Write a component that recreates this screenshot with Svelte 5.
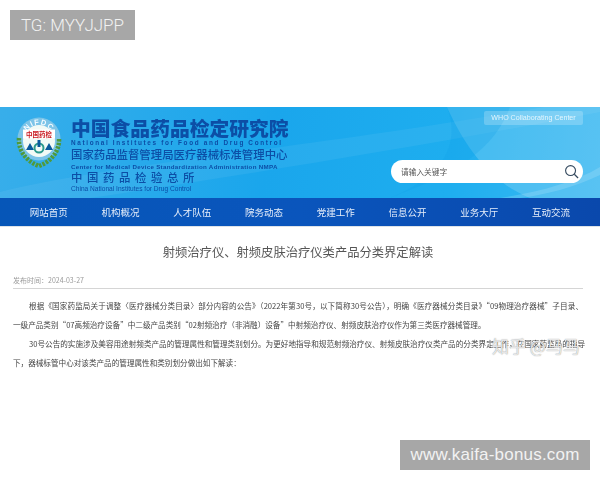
<script>
    const navItems = ['网站首页', '机构概况', '人才队伍', '院务动态', '党建工作', '信息公开', '业务大厅', '互动交流'];

    const paragraphs = [
        '根据《国家药监局关于调整〈医疗器械分类目录〉部分内容的公告》（2022年第30号，以下简称30号公告），明确《医疗器械分类目录》“09物理治疗器械”子目录、一级产品类别“07高频治疗设备”中二级产品类别“02射频治疗（非消融）设备”中射频治疗仪、射频皮肤治疗仪作为第三类医疗器械管理。',
        '30号公告的实施涉及美容用途射频类产品的管理属性和管理类别划分。为更好地指导和规范射频治疗仪、射频皮肤治疗仪类产品的分类界定工作，在国家药监局的指导下，器械标管中心对该类产品的管理属性和类别划分做出如下解读：'
    ];
</script>

<main>
    <div class="shot">
        <header class="banner">
            <!-- background swooshes -->
            <svg class="swoosh" viewBox="0 0 600 91" preserveAspectRatio="none" aria-hidden="true">
                <path d="M447 0 C465 40 490 75 530 91 L600 91 L600 0 Z" fill="#9adcf6" opacity="0.3" />
                <path d="M0 85 C120 55 330 40 600 -10 L600 5 C420 40 230 70 90 91 L0 91 Z" fill="#ffffff" opacity="0.06" />
                <path d="M390 91 C430 75 490 55 510 0 L447 0 C462 40 440 70 390 91 Z" fill="#0f9fe6" opacity="0.25" />
                <path d="M500 91 C540 85 575 75 600 60 L600 68 C575 80 545 88 520 91 Z" fill="#ffffff" opacity="0.15" />
            </svg>

            <div class="brand">
                <svg class="logo" viewBox="0 0 50 58" aria-hidden="true">
                    <circle cx="25" cy="25" r="21.5" fill="#7cc4e8" />
                    <circle cx="25" cy="27" r="16" fill="#f2faf6" />
                    <path d="M5 24 C4 38 14 48 25 52 C36 48 46 38 45 24" fill="none" stroke="#4f9a3c" stroke-width="4.5" stroke-dasharray="2.5 1.2" />
                    <path id="arc" d="M10.5 25 A14.5 14.5 0 0 1 39.5 25" fill="none" />
                    <text class="logo-en"><textPath href="#arc" startOffset="50%" text-anchor="middle">NIFDC</textPath></text>
                    <rect x="9" y="15.5" width="32" height="9" fill="#fff" />
                    <text x="25" y="23" class="logo-cn">中国药检</text>
                    <path d="M12 36 L16 29 L20 36 Z M31 36 L35 29 L39 36 Z" fill="#0a5a9c" />
                    <circle cx="25" cy="34" r="4.5" fill="none" stroke="#2a9a8c" stroke-width="2" />
                    <rect x="23.5" y="26" width="3" height="7" fill="#0a5a9c" />
                </svg>
                <div class="names">
                    <div class="name-main">中国食品药品检定研究院</div>
                    <div class="name-main-en">National Institutes for Food and Drug Control</div>
                    <div class="name-sub">国家药品监督管理局医疗器械标准管理中心</div>
                    <div class="name-sub-en">Center for Medical Device Standardization Administration NMPA</div>
                    <div class="name-third">中国药品检验总所</div>
                    <div class="name-third-en">China National Institutes for Drug Control</div>
                </div>
            </div>

            <div class="side">
                <div class="who">WHO Collaborating Center</div>
                <div class="search">
                    <span>请输入关键字</span>
                    <svg viewBox="0 0 16 16" width="15" height="15" aria-hidden="true">
                        <circle cx="7" cy="7" r="5.3" fill="none" stroke="#34495e" stroke-width="1.2" />
                        <path d="M11 11 L15 15" stroke="#34495e" stroke-width="1.4" />
                    </svg>
                </div>
            </div>
        </header>

        <nav class="nav">
            {#each navItems as item}
                <span>{item}</span>
            {/each}
        </nav>

        <article class="article">
            <h1>射频治疗仪、射频皮肤治疗仪类产品分类界定解读</h1>
            <div class="date">发布时间：2024-03-27</div>
            {#each paragraphs as text}
                <p>{text}</p>
            {/each}
        </article>
    </div>

    <div class="tag tag-top">TG: MYYJJPP</div>
    <div class="watermark">知乎 @马马</div>
    <div class="tag tag-bottom">www.kaifa-bonus.com</div>
</main>

<style>
    :global(body) {
        background: #fff;
    }

    main {
        position: relative;
        width: 600px;
        height: 480px;
        overflow: hidden;
        background: #fff;
        font-family: "Noto Sans CJK SC", "Liberation Sans", sans-serif;
    }

    .shot {
        padding-top: 107px;
        filter: blur(0.4px);
    }

    .banner {
        position: relative;
        height: 91px;
        display: flex;
        justify-content: space-between;
        padding: 4px 17px 0 14px;
        box-sizing: border-box;
        background: linear-gradient(100deg, #38aeea 0%, #1aa6ec 45%, #1eaeef 75%, #3cb9f2 100%);
    }

    .swoosh {
        position: absolute;
        inset: 0;
        width: 100%;
        height: 100%;
    }

    .brand {
        position: relative;
        display: flex;
        gap: 7px;
    }

    .logo {
        width: 50px;
        height: 58px;
        margin-top: 3px;
    }

    .logo-cn {
        font-size: 6.5px;
        font-weight: 700;
        fill: #c8161d;
        text-anchor: middle;
    }

    .logo-en {
        font-family: "Liberation Sans", sans-serif;
        font-size: 7.5px;
        font-weight: 700;
        letter-spacing: 1.2px;
        fill: #f4fbff;
    }

    .names {
        color: #0c4ea6;
        white-space: nowrap;
    }

    .name-main {
        font-size: 19.8px;
        font-weight: 900;
        line-height: 23px;
        margin-top: 5px;
    }

    .name-main-en {
        font-family: "Liberation Sans", sans-serif;
        font-size: 6.4px;
        font-weight: 700;
        letter-spacing: 1.65px;
        line-height: 8px;
        margin-top: 0;
    }

    .name-sub {
        font-size: 11.4px;
        font-weight: 500;
        line-height: 13px;
        margin-top: 1px;
    }

    .name-sub-en {
        font-family: "Liberation Sans", sans-serif;
        font-size: 6.2px;
        font-weight: 700;
        line-height: 7px;
        letter-spacing: 0.3px;
        margin-top: 2px;
    }

    .name-third {
        font-size: 11.4px;
        font-weight: 500;
        letter-spacing: 4.6px;
        line-height: 15px;
    }

    .name-third-en {
        font-family: "Liberation Sans", sans-serif;
        font-size: 6.6px;
        line-height: 7px;
    }

    .side {
        position: relative;
        width: 192px;
        display: flex;
        flex-direction: column;
        align-items: flex-end;
        justify-content: space-between;
        padding-bottom: 15px;
    }

    .who {
        width: 99px;
        height: 14px;
        background: rgba(255, 255, 255, 0.22);
        border-radius: 2px;
        color: #e4f6fe;
        font-family: "Liberation Sans", sans-serif;
        font-size: 7.1px;
        line-height: 14px;
        text-align: center;
    }

    .search {
        width: 192px;
        height: 23px;
        background: #fff;
        border-radius: 11.5px;
        display: flex;
        align-items: center;
        justify-content: space-between;
        padding: 0 4px 0 10px;
        box-sizing: border-box;
        color: #555;
        font-size: 7.7px;
    }

    .nav {
        height: 28px;
        padding: 0 13px;
        display: grid;
        grid-template-columns: repeat(8, 1fr);
        align-items: center;
        justify-items: center;
        background: linear-gradient(90deg, #0656b8, #0a55bc 50%, #0a48ac);
        border-bottom: 1px solid #dde3e8;
        color: #e6eefa;
        font-size: 9.5px;
    }

    .article {
        padding: 0 17px 0 13px;
        color: #444;
    }

    h1 {
        margin: 15px 0 0;
        font-size: 12.3px;
        font-weight: 400;
        line-height: 20px;
        text-align: center;
        color: #555;
    }

    .date {
        margin-top: 13px;
        padding-bottom: 3px;
        border-bottom: 1px solid #d5d5d5;
        font-size: 7px;
        line-height: 10px;
        color: #9a9a9a;
    }

    p {
        margin: 7px 0 0;
        font-size: 7.6px;
        line-height: 19px;
        text-indent: 16px;
        text-align: justify;
    }

    p + p {
        margin-top: 0;
        margin-right: -2px;
    }

    .tag {
        position: absolute;
        height: 30px;
        background: #a7a7a7;
        color: #f2f2f2;
        font-family: "Liberation Sans", sans-serif;
        line-height: 30px;
        text-align: center;
    }

    .tag-top {
        left: 10px;
        top: 10px;
        width: 125px;
        font-family: Roboto, sans-serif;
        font-weight: 300;
        font-size: 17px;
    }

    .tag-bottom {
        left: 400px;
        top: 440px;
        width: 190px;
        font-size: 17px;
        letter-spacing: 0.2px;
    }

    .watermark {
        position: absolute;
        left: 492px;
        top: 336px;
        font-size: 17px;
        line-height: 20px;
        color: rgba(255, 255, 255, 0.8);
        text-shadow: 0 0 1px rgba(90, 90, 90, 0.8);
        white-space: nowrap;
    }
</style>
